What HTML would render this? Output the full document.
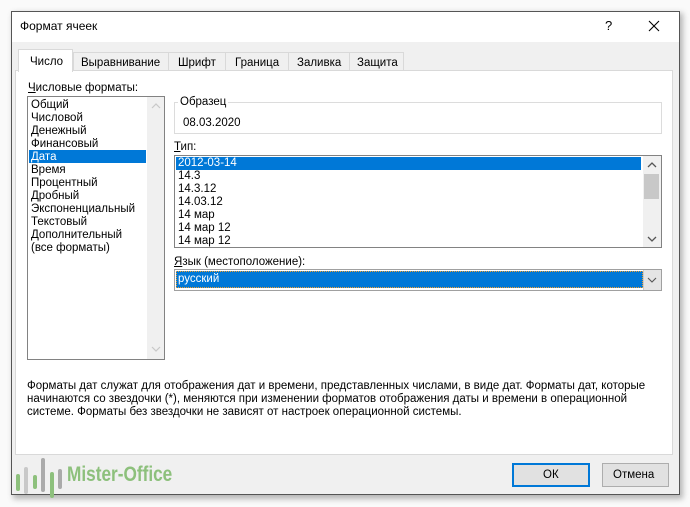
<!DOCTYPE html>
<html><head><meta charset="utf-8"><style>
*{margin:0;padding:0;box-sizing:border-box}
body{width:690px;height:507px;background:#fafafa;position:relative;overflow:hidden;font-family:"Liberation Sans","DejaVu Sans",sans-serif;font-size:11.5px;color:#000}
.a{position:absolute}
.t{position:absolute;white-space:nowrap;line-height:13px}
</style></head><body>
<div class="a" style="left:13px;top:13px;width:670px;height:486px;background:#888;filter:blur(3px);opacity:.6"></div>
<div class="a" style="left:11px;top:11px;width:669px;height:484px;background:#f0f0f0;border:1px solid #555"></div>
<div class="a" style="left:12px;top:12px;width:667px;height:30px;background:#fff"></div>
<div class="t" style="left:20px;top:20px;font-size:12px">Формат ячеек</div>
<div class="t" style="left:605px;top:19px;font-size:13px">?</div>
<svg class="a" style="left:648px;top:20px" width="12" height="12"><path d="M1 1L11 11M11 1L1 11" stroke="#000" stroke-width="1.1"/></svg>
<div class="a" style="left:15px;top:70px;width:658px;height:385px;background:#fff;border:1px solid #d9d9d9"></div>
<div class="a" style="left:73px;top:52px;width:331px;height:19px;border:1px solid #d9d9d9;background:#f0f0f0"></div>
<div class="a" style="left:168px;top:52px;width:1px;height:18px;background:#d9d9d9"></div>
<div class="a" style="left:225px;top:52px;width:1px;height:18px;background:#d9d9d9"></div>
<div class="a" style="left:288px;top:52px;width:1px;height:18px;background:#d9d9d9"></div>
<div class="a" style="left:349px;top:52px;width:1px;height:18px;background:#d9d9d9"></div>
<div class="a" style="left:18px;top:49px;width:55px;height:23px;background:#fff;border:1px solid #d9d9d9;border-bottom:none"></div>
<div class="t" style="left:30px;top:56px">Число</div>
<div class="t" style="left:81px;top:57px">Выравнивание</div>
<div class="t" style="left:178px;top:57px">Шрифт</div>
<div class="t" style="left:235px;top:57px">Граница</div>
<div class="t" style="left:297px;top:57px">Заливка</div>
<div class="t" style="left:357px;top:57px">Защита</div>
<div class="t" style="left:28px;top:82px"><u>Ч</u>исловые форматы:</div>
<div class="a" style="left:27px;top:96px;width:138px;height:264px;border:1px solid #828282;background:#fff"></div>
<div class="a" style="left:147px;top:97px;width:17px;height:262px;background:#f0f0f0"></div>
<svg class="a" style="left:151px;top:103px" width="10" height="6"><path d="M1 5L5 1L9 5" stroke="#c8c8c8" fill="none" stroke-width="1.2"/></svg>
<svg class="a" style="left:151px;top:346px" width="10" height="6"><path d="M1 1L5 5L9 1" stroke="#c8c8c8" fill="none" stroke-width="1.2"/></svg>
<div class="a" style="left:29px;top:150px;width:117px;height:13px;background:#0078d7"></div>
<div class="t" style="left:31px;top:99px;line-height:13px">Общий<br>Числовой<br>Денежный<br>Финансовый<br><span style="color:#fff">Дата</span><br>Время<br>Процентный<br>Дробный<br>Экспоненциальный<br>Текстовый<br>Дополнительный<br>(все форматы)</div>
<div class="a" style="left:174px;top:102px;width:488px;height:32px;border:1px solid #dcdcdc"></div>
<div class="t" style="left:178px;top:96px;background:#fff;padding:0 2px">Образец</div>
<div class="t" style="left:183px;top:117px">08.03.2020</div>
<div class="t" style="left:174px;top:141px"><u>Т</u>ип:</div>
<div class="a" style="left:174px;top:155px;width:488px;height:93px;border:1px solid #828282;background:#fff"></div>
<div class="a" style="left:643px;top:156px;width:18px;height:91px;background:#f0f0f0"></div>
<div class="a" style="left:644px;top:174px;width:15px;height:25px;background:#c8c8c8"></div>
<svg class="a" style="left:647px;top:162px" width="10" height="6"><path d="M1 5L5 1L9 5" stroke="#555" fill="none" stroke-width="1.3"/></svg>
<svg class="a" style="left:647px;top:236px" width="10" height="6"><path d="M1 1L5 5L9 1" stroke="#555" fill="none" stroke-width="1.3"/></svg>
<div class="a" style="left:176px;top:157px;width:465px;height:13px;background:#0078d7"></div>
<div class="t" style="left:178px;top:157px;line-height:13px"><span style="color:#fff">2012-03-14</span><br>14.3<br>14.3.12<br>14.03.12<br>14 мар<br>14 мар 12<br>14 мар 12</div>
<div class="t" style="left:174px;top:256px"><u>Я</u>зык (местоположение):</div>
<div class="a" style="left:174px;top:269px;width:488px;height:22px;border:1px solid #a0a0a0;background:#fff"></div>
<div class="a" style="left:176px;top:271px;width:467px;height:17px;background:#0078d7;border:1px dotted #f0a030"></div>
<div class="t" style="left:178px;top:273px;color:#fff">русский</div>
<div class="a" style="left:643px;top:270px;width:18px;height:20px;background:#e5e5e5;border-left:1px solid #ccc"></div>
<svg class="a" style="left:647px;top:277px" width="10" height="6"><path d="M1 1L5 5L9 1" stroke="#555" fill="none" stroke-width="1.1"/></svg>
<div class="t" style="left:27px;top:380px">Форматы дат служат для отображения дат и времени, представленных числами, в виде дат. Форматы дат, которые<br>начинаются со звездочки (*), меняются при изменении форматов отображения даты и времени в операционной<br>системе. Форматы без звездочки не зависят от настроек операционной системы.</div>
<div class="a" style="left:512px;top:463px;width:78px;height:24px;background:#e1e1e1;border:2px solid #0078d7"></div>
<div class="t" style="left:543px;top:469px">ОК</div>
<div class="a" style="left:602px;top:463px;width:67px;height:24px;background:#e1e1e1;border:1px solid #adadad"></div>
<div class="t" style="left:613px;top:469px">Отмена</div>
<div class="a" style="left:16px;top:474px;width:4px;height:17px;background:#8dc07c;border-radius:2px"></div>
<div class="a" style="left:24px;top:467px;width:4px;height:27px;background:#c8c8c8;border-radius:2px"></div>
<div class="a" style="left:33px;top:475px;width:4px;height:14px;background:#8dc07c;border-radius:2px"></div>
<div class="a" style="left:41px;top:458px;width:4px;height:34px;background:#aaa;border-radius:2px"></div>
<div class="a" style="left:50px;top:472px;width:4px;height:26px;background:#8dc07c;border-radius:2px"></div>
<div class="a" style="left:58px;top:469px;width:4px;height:20px;background:#aaa;border-radius:2px"></div>
<div class="t" style="left:67px;top:463px;font-size:21px;line-height:24px;font-weight:bold;color:#8dc07c;transform:scaleX(.82);transform-origin:left">Mister-Office</div>
</body></html>
